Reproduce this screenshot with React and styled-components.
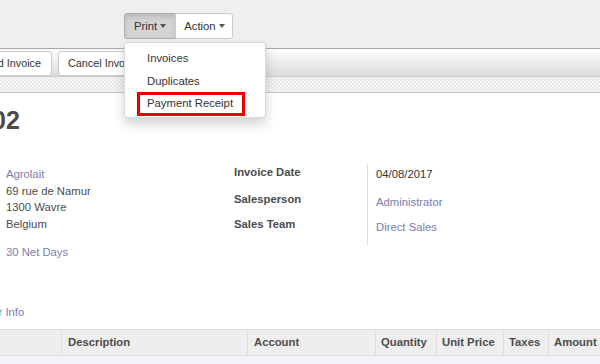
import React from 'react';
import styled, { createGlobalStyle } from 'styled-components';

const GlobalStyle = createGlobalStyle`
  body {
    margin: 0;
    width: 600px;
    height: 364px;
    overflow: hidden;
    background: #ffffff;
    font-family: "Liberation Sans", Arial, sans-serif;
    font-size: 11.3px;
    color: #4c4c4c;
  }
`;

const Page = styled.div`
  position: relative;
  width: 600px;
  height: 364px;
  overflow: hidden;
`;

const ControlPanel = styled.div`
  height: 49px;
  box-sizing: border-box;
  padding: 13px 0 0 124px;
  background: #f0eeee;
  border-bottom: 1px solid #a9a7a7;
`;

const ButtonGroup = styled.div`
  display: inline-flex;
`;

const DropButton = styled.div`
  display: flex;
  align-items: center;
  gap: 3px;
  height: 26px;
  box-sizing: border-box;
  padding: ${({ first }) => (first ? '0 9px' : '0 7px 0 8px')};
  border: 1px solid ${({ active }) => (active ? '#adadad' : '#cccccc')};
  background: ${({ active }) => (active ? '#d4d4d4' : '#ffffff')};
  box-shadow: ${({ active }) => (active ? 'inset 0 3px 5px rgba(0, 0, 0, .125)' : 'none')};
  color: #333333;
  border-radius: ${({ first }) => (first ? '3px 0 0 3px' : '0 3px 3px 0')};
  margin-left: ${({ first }) => (first ? '0' : '-1px')};
`;

const Caret = styled.span`
  width: 0;
  height: 0;
  border-top: 4px solid #555555;
  border-left: 3.5px solid transparent;
  border-right: 3.5px solid transparent;
`;

const Menu = styled.ul`
  position: absolute;
  left: 124px;
  top: 42px;
  width: 142px;
  height: 76px;
  box-sizing: border-box;
  margin: 0;
  padding: 4px 0;
  list-style: none;
  background: #ffffff;
  border: 1px solid rgba(0, 0, 0, .15);
  border-radius: 4px;
  box-shadow: 0 6px 12px rgba(0, 0, 0, .175);
  z-index: 2;
`;

const MenuItem = styled.li`
  position: relative;
  height: 22.5px;
  line-height: 22.5px;
  padding-left: 22px;
  color: #333333;

  ${({ marked }) => (marked ? `
    &::after {
      content: '';
      position: absolute;
      left: 12px;
      right: 20px;
      top: 0;
      bottom: -1px;
      border: 3px solid #ee0000;
    }
  ` : '')}
`;

const StatusBar = styled.div`
  display: flex;
  align-items: center;
  gap: 6px;
  height: 28px;
  box-sizing: border-box;
  padding-top: 1px;
  background: linear-gradient(#fdfdfd, #dcdcdc);
  border-bottom: 1px solid #c9c9c9;
`;

const BarButton = styled.div`
  flex: none;
  height: 25px;
  line-height: 23px;
  box-sizing: border-box;
  padding: 0 10px 0 9px;
  font-size: 10.8px;
  background: #ffffff;
  border: 1px solid #cccccc;
  border-radius: 3px;
  color: #333333;
  margin-left: ${({ offset }) => offset || '0'};
`;

const Checkers = styled.div`
  height: 15px;
  background-color: #f3f3f3;
  background-image: repeating-conic-gradient(#e9e9e9 0% 25%, #f6f6f6 0% 50%);
  background-size: 4px 4px;
  border-bottom: 1px solid #c6c5d3;
`;

const Sheet = styled.div`
  background: #ffffff;
`;

const Title = styled.h1`
  margin: 0;
  padding-top: 12px;
  margin-left: -8px;
  height: 38px;
  font-size: 25px;
  line-height: 30px;
  font-weight: bold;
  color: #4c4c4c;
`;

const Groups = styled.div`
  display: grid;
  grid-template-columns: 228px 1fr;
  padding: 23px 0 0 6px;
  height: 139px;
  box-sizing: border-box;
`;

const Address = styled.div`
  display: flex;
  flex-direction: column;
`;

const Line = styled.div`
  height: 16.7px;
  line-height: 17px;
  color: ${({ link }) => (link ? '#7c7bad' : '#4c4c4c')};
  margin-top: ${({ gap }) => gap || '0'};
`;

const Fields = styled.div`
  display: grid;
  grid-template-columns: 133px 1fr;
  margin-top: -2px;
`;

const Labels = styled.div`
  display: flex;
  flex-direction: column;
  padding-top: 1px;
`;

const Label = styled.div`
  height: ${({ h }) => h};
  line-height: 14px;
  font-weight: bold;
  color: #4c4c4c;
`;

const Values = styled.div`
  display: flex;
  flex-direction: column;
  height: 81px;
  padding-left: 8px;
  border-left: 1px solid #dddddd;
  padding-top: 3px;
  box-sizing: border-box;
`;

const Value = styled.div`
  height: ${({ h }) => h};
  line-height: 14px;
  color: ${({ link }) => (link ? '#7c7bad' : '#333333')};
`;

const Tab = styled.div`
  margin-top: 21px;
  margin-left: -26px;
  height: 18px;
  line-height: 18px;
  color: #7c7bad;
`;

const Table = styled.div`
  margin-top: 8px;
  display: grid;
  grid-template-columns: 61px 186px 128px 61px 67px 45px 1fr;
  height: 27px;
  background: #eeeeee;
  border-top: 1px solid #dddddd;
  border-bottom: 1px solid #dddddd;
  box-sizing: border-box;
`;

const Head = styled.div`
  padding-left: ${({ pad }) => pad || '5px'};
  line-height: 25px;
  font-weight: bold;
  color: #4c4c4c;
  border-left: ${({ first }) => (first ? 'none' : '1px solid #dddddd')};
  white-space: nowrap;
  overflow: hidden;
`;

const TableBody = styled.div`
  height: 12px;
  background: #f2f2f8;
`;

export default function App() {
  return (
    <Page>
      <GlobalStyle />
      <ControlPanel>
        <ButtonGroup>
          <DropButton active first>Print <Caret /></DropButton>
          <DropButton>Action <Caret /></DropButton>
        </ButtonGroup>
      </ControlPanel>
      <Menu>
        <MenuItem>Invoices</MenuItem>
        <MenuItem>Duplicates</MenuItem>
        <MenuItem marked>Payment Receipt</MenuItem>
      </Menu>
      <StatusBar>
        <BarButton offset="-41px">Refund Invoice</BarButton>
        <BarButton>Cancel Invoice</BarButton>
      </StatusBar>
      <Checkers />
      <Sheet>
        <Title>02</Title>
        <Groups>
          <Address>
            <Line link>Agrolait</Line>
            <Line>69 rue de Namur</Line>
            <Line>1300 Wavre</Line>
            <Line>Belgium</Line>
            <Line link gap="11px">30 Net Days</Line>
          </Address>
          <Fields>
            <Labels>
              <Label h="27px">Invoice Date</Label>
              <Label h="25px">Salesperson</Label>
              <Label h="25px">Sales Team</Label>
            </Labels>
            <Values>
              <Value h="28px">04/08/2017</Value>
              <Value h="25px" link>Administrator</Value>
              <Value h="25px" link>Direct Sales</Value>
            </Values>
          </Fields>
        </Groups>
        <Tab>Other Info</Tab>
        <Table>
          <Head first />
          <Head pad="6px">Description</Head>
          <Head pad="6px">Account</Head>
          <Head>Quantity</Head>
          <Head>Unit Price</Head>
          <Head>Taxes</Head>
          <Head>Amount</Head>
        </Table>
        <TableBody />
      </Sheet>
    </Page>
  );
}
